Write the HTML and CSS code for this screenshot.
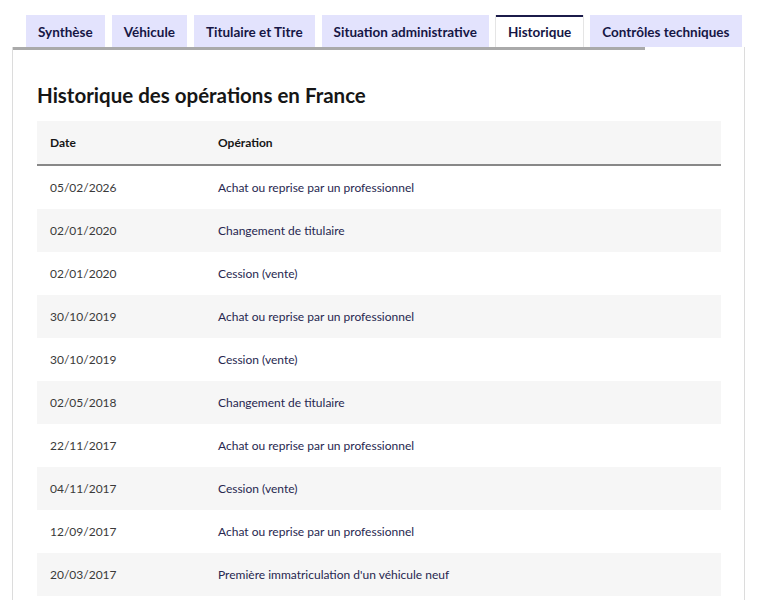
FILE: index.html
```html
<!DOCTYPE html>
<html lang="fr">
<head>
    <meta charset="UTF-8">
    <meta name="viewport" content="width=device-width, initial-scale=1.0">
    <title>Historique</title>
    <link rel="stylesheet" href="styles.css">
</head>
<body>
    <div class="tabs">
        <ul class="tab-list">
            <li class="tab">Synthèse</li>
            <li class="tab">Véhicule</li>
            <li class="tab">Titulaire et Titre</li>
            <li class="tab">Situation administrative</li>
            <li class="tab active">Historique</li>
            <li class="tab">Contrôles techniques</li>
        </ul>
        <div class="tab-line"></div>
        <section class="panel">
            <h2>Historique des opérations en France</h2>
            <table class="history">
                <thead>
                    <tr>
                        <th class="col-date">Date</th>
                        <th>Opération</th>
                    </tr>
                </thead>
                <tbody>
                    <tr><td>05/02/2026</td><td class="op">Achat ou reprise par un professionnel</td></tr>
                    <tr><td>02/01/2020</td><td class="op">Changement de titulaire</td></tr>
                    <tr><td>02/01/2020</td><td class="op">Cession (vente)</td></tr>
                    <tr><td>30/10/2019</td><td class="op">Achat ou reprise par un professionnel</td></tr>
                    <tr><td>30/10/2019</td><td class="op">Cession (vente)</td></tr>
                    <tr><td>02/05/2018</td><td class="op">Changement de titulaire</td></tr>
                    <tr><td>22/11/2017</td><td class="op">Achat ou reprise par un professionnel</td></tr>
                    <tr><td>04/11/2017</td><td class="op">Cession (vente)</td></tr>
                    <tr><td>12/09/2017</td><td class="op">Achat ou reprise par un professionnel</td></tr>
                    <tr><td>20/03/2017</td><td class="op">Première immatriculation d'un véhicule neuf</td></tr>
                </tbody>
            </table>
        </section>
    </div>
</body>
</html>
```

FILE: styles.css
```css
body {
    margin: 0;
    padding: 0;
    background: #fff;
    font-family: Lato, "Noto Sans", sans-serif;
    color: #161616;
}

.tabs {
    margin-left: 12px;
    width: 733px;
}

.tab-list {
    list-style: none;
    margin: 15px 0 0 0;
    padding: 0 0 0 14px;
    display: flex;
    gap: 7px;
}

.tab {
    flex-shrink: 0;
    white-space: nowrap;
    background: #e3e3fd;
    color: #161645;
    font-weight: 700;
    font-size: 13.5px;
    height: 30px;
    line-height: 31px;
    padding: 0 12px;
    border-top: 2px solid transparent;
}

.tab.active {
    background: #fff;
    border-top: 2px solid #1b1b4a;
    box-shadow: 1px 0 0 #e5e5e5, -1px 0 0 #e5e5e5;
}

.tab-line {
    width: 633px;
    height: 3px;
    background: #aaa;
}

.panel {
    border-left: 1px solid #dcdcdc;
    border-right: 1px solid #dcdcdc;
    padding: 34px 23px 20px 24px;
    margin-top: -3px;
}

.panel h2 {
    margin: 0 0 12px 0;
    font-size: 20.5px;
    line-height: 28px;
    font-weight: 700;
    color: #161616;
}

.history {
    width: 100%;
    border-collapse: collapse;
    table-layout: fixed;
    font-size: 12px;
}

.history th {
    text-align: left;
    font-weight: 700;
    background: #f6f6f6;
    color: #161616;
    height: 43px;
    padding: 0 13px;
    border-bottom: 2px solid #888;
}

.history .col-date {
    width: 142px;
}

.history td {
    height: 43px;
    padding: 0 13px;
    color: #3a3a3a;
}

.history td.op {
    color: #272750;
}

.history tbody tr:nth-child(even) td {
    background: #f6f6f6;
}
```
